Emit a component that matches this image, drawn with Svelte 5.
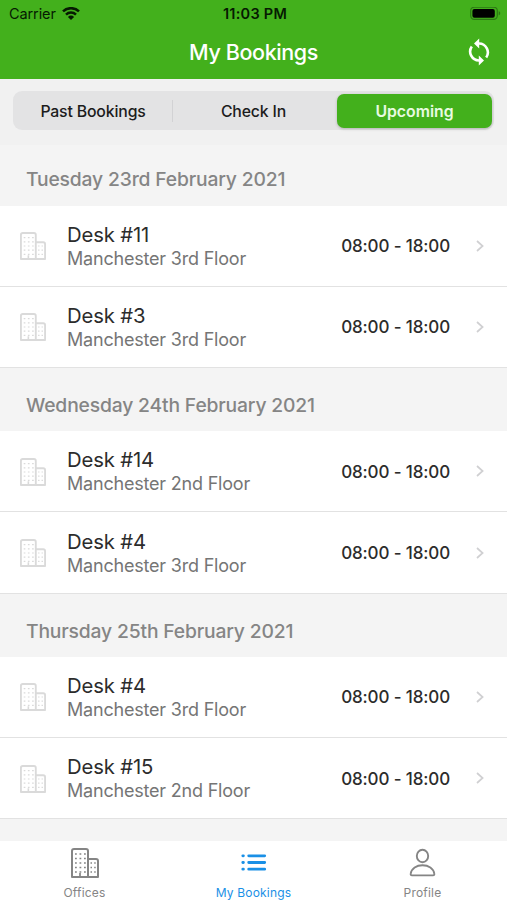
<script>
    const tabs = ["Past Bookings", "Check In", "Upcoming"];
    let selected = "Upcoming";
    const days = [
        {
            date: "Tuesday 23rd February 2021",
            bookings: [
                { desk: "Desk #11", office: "Manchester 3rd Floor", time: "08:00 - 18:00" },
                { desk: "Desk #3", office: "Manchester 3rd Floor", time: "08:00 - 18:00" },
            ],
        },
        {
            date: "Wednesday 24th February 2021",
            bookings: [
                { desk: "Desk #14", office: "Manchester 2nd Floor", time: "08:00 - 18:00" },
                { desk: "Desk #4", office: "Manchester 3rd Floor", time: "08:00 - 18:00" },
            ],
        },
        {
            date: "Thursday 25th February 2021",
            bookings: [
                { desk: "Desk #4", office: "Manchester 3rd Floor", time: "08:00 - 18:00" },
                { desk: "Desk #15", office: "Manchester 2nd Floor", time: "08:00 - 18:00" },
            ],
        },
    ];
</script>

<!-- office building, used in the rows and in the tab bar -->
{#snippet building()}
<svg class="building" viewBox="0 0 28 30" fill="none" stroke="currentColor">
<path d="M1 29V3a2 2 0 0 1 2-2h12a2 2 0 0 1 2 2v26zM17 11h8a2 2 0 0 1 2 2v16H17" stroke-width="2" stroke-linejoin="round" />
<path d="M4 6h11M4 10.5h11M4 15h11M4 19.5h11M4 24h11" stroke-width="1.3" stroke-dasharray="1.8 2.7" />
<path d="M19.5 15h6M19.5 19.5h6M19.5 24h6" stroke-width="1.3" stroke-dasharray="1.5 2.2" />
<path d="M9 29v-4" stroke-width="1.7" />
</svg>
{/snippet}

<div class="app">
<header>
<div class="status">
<div class="carrier">
<span>Carrier</span>
<svg width="18" height="14" viewBox="0 0 18 14" fill="none" stroke="#061a02" stroke-width="2.5">
<path d="M1 4.4a11.5 11.5 0 0 1 16 0M4 7.6a7.2 7.2 0 0 1 10 0" />
<path d="M9 13 5.9 9.9a4.4 4.4 0 0 1 6.2 0z" fill="#061a02" stroke="none" />
</svg>
</div>
<span class="clock">11:03 PM</span>
<svg class="battery" width="31" height="14" viewBox="0 0 31 14">
<rect x="0.7" y="0.2" width="26.6" height="12.2" rx="3.6" fill="none" stroke="#2c7813" stroke-width="1.2" />
<rect x="2.4" y="1.9" width="22.4" height="8.8" rx="2" fill="#000" />
<path d="M28.7 4.3c2 .6 2 3.4 0 4z" fill="#2c7813" />
</svg>
</div>
<div class="title">
<h1>My Bookings</h1>
<svg class="sync" width="22" height="28" viewBox="0 0 22 28" fill="none" stroke="#fff" stroke-width="2.6">
<path d="M11 5.5a8.9 8.9 0 0 1 7.2 14M11 22.5a8.9 8.9 0 0 1-7.2-14" />
<path d="M11.2.5v10L6 5.5zM10.8 17.5v10L16 22.5z" fill="#fff" stroke="none" />
</svg>
</div>
</header>

<div class="filter">
<div class="segments">
{#each tabs as tab}
<button class:selected={tab == selected} on:click={() => (selected = tab)}><span>{tab}</span></button>
{/each}
</div>
</div>

<main>
{#each days as day}
<section>
<h2>{day.date}</h2>
{#each day.bookings as b}
<div class="row">
{@render building()}
<div class="info">
<p class="desk">{b.desk}</p>
<p class="office">{b.office}</p>
</div>
<span class="time">{b.time}</span>
<svg class="chevron" width="8" height="12" viewBox="0 0 8 12" fill="none" stroke="#d0d0d2" stroke-width="1.7">
<path d="M1 1l5.6 5L1 11" />
</svg>
</div>
{/each}
</section>
{/each}
</main>

<nav>
<div class="item">
{@render building()}
<span>Offices</span>
</div>
<div class="item active">
<svg width="28" height="30" viewBox="0 0 28 30" fill="none" stroke="currentColor" stroke-width="2.8" stroke-linecap="round">
<path d="M8.7 7.8h16M8.7 14.5h16M8.7 21.2h16M2.8 7.8h.6M2.8 14.5h.6M2.8 21.2h.6" />
</svg>
<span>My Bookings</span>
</div>
<div class="item">
<svg width="28" height="30" viewBox="0 0 28 30" fill="none" stroke="currentColor" stroke-width="1.9" stroke-linejoin="round">
<ellipse cx="13.5" cy="8" rx="5.7" ry="6.3" />
<path d="M3 27.4h21c1 0 1.5-.6 1.3-1.7C24.5 20.5 19.5 17.3 13.5 17.3S2.500 20.500 1.700 25.700c-.2 1.100.3 1.700 1.300 1.700z" />
</svg>
<span>Profile</span>
</div>
</nav>
</div>

<style>
    :global(body) {
        margin: 0;
    }
    .app {
        display: flex;
        flex-direction: column;
        width: 507px;
        height: 900px;
        overflow: hidden;
        background: #f4f4f4;
        font-family: Inter, "Liberation Sans", sans-serif;
        color: #2c2c2c;
    }
    h1, h2, p {
        margin: 0;
    }
    svg {
        display: block;
        flex: none;
    }
    header {
        height: 79px;
        flex: none;
        background: #43b01c;
    }
    .status {
        display: grid;
        grid-template-columns: 1fr auto 1fr;
        align-items: center;
        height: 27px;
        padding: 0 6px 0 9px;
        font-size: 14.5px;
        color: #061a02;
    }
    .carrier {
        display: flex;
        align-items: center;
        gap: 6px;
        letter-spacing: -0.1px;
    }
    .clock {
        font-weight: 600;
        letter-spacing: 0.25px;
    }
    .battery {
        justify-self: end;
    }
    .title {
        display: grid;
        grid-template-columns: 1fr auto 1fr;
        align-items: center;
        height: 50px;
        padding: 0 17px;
    }
    h1 {
        grid-column: 2;
        font-size: 21.5px;
        font-weight: 500;
        letter-spacing: -0.4px;
        color: #fff;
    }
    .sync {
        justify-self: end;
    }
    .filter {
        height: 66px;
        flex: none;
        box-sizing: border-box;
        padding: 12px 13px 0;
        background: #f1f1f1;
    }
    .segments {
        display: grid;
        grid-template-columns: 160px 161px 1fr;
        height: 39px;
        box-sizing: border-box;
        padding: 3px 2px 2px 0;
        border-radius: 9px;
        background: #e3e3e4;
    }
    .segments button {
        margin: 0;
        padding: 1px 0 0;
        border: 0;
        background: none;
        font-family: inherit;
        font-size: 15.8px;
        font-weight: 450;
        letter-spacing: -0.15px;
        color: #1c1c1c;
    }
    .segments button:first-child {
        background: linear-gradient(#d2d2d4, #d2d2d4) right center / 1px 22px no-repeat;
    }
    .segments button.selected {
        margin-left: 3px;
        border-radius: 7px;
        background: #43b01c;
        box-shadow: 0 1px 3px rgba(0,0,0,0.22);
        font-weight: 600;
        letter-spacing: 0;
        color: #e9fbe2;
    }
    main {
        flex: 1;
        min-height: 0;
    }
    h2 {
        height: 63px;
        box-sizing: border-box;
        padding: 5px 26px 0;
        line-height: 64px;
        font-size: 19.3px;
        font-weight: 450;
        letter-spacing: -0.16px;
        color: #858585;
    }
    section:first-child h2 {
        height: 60.5px;
        padding-top: 0;
        line-height: 69px;
    }
    .row {
        display: flex;
        align-items: center;
        height: 81.3px;
        box-sizing: border-box;
        padding: 0 23px 0 20px;
        border-bottom: 1px solid #e2e2e2;
        background: #fff;
    }
    .row .building {
        width: 26px;
        height: 28px;
        margin-top: 1px;
        color: #dadada;
    }
    .info {
        flex: 1;
        margin-left: 21px;
        padding-top: 1.5px;
    }
    .desk {
        line-height: 24px;
        font-size: 20.3px;
        letter-spacing: -0.15px;
    }
    .office {
        line-height: 23px;
        font-size: 18px;
        letter-spacing: -0.2px;
        color: #757575;
    }
    .time {
        margin-top: 1px;
        font-size: 17px;
        font-weight: 450;
        letter-spacing: -0.13px;
    }
    .chevron {
        margin-left: 26px;
    }
    nav {
        display: flex;
        height: 59px;
        flex: none;
        background: #fff;
    }
    .item {
        display: flex;
        flex: 1;
        flex-direction: column;
        align-items: center;
        padding-top: 7px;
        font-size: 12px;
        color: #858585;
    }
    .item svg {
        width: 28px;
        height: 30px;
    }
    .item span {
        margin-top: 7px;
        line-height: 16px;
        letter-spacing: 0.2px;
    }
    .item.active {
        color: #1a90e6;
    }
</style>
